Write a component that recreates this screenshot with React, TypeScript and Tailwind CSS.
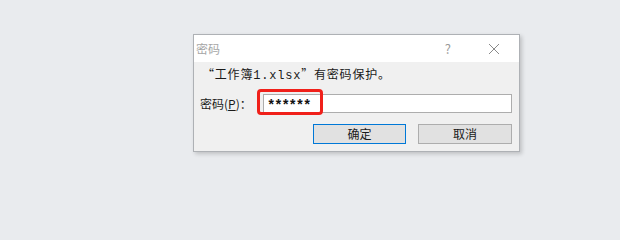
import React from "react";

const cjk = { fontFamily: '"Microsoft YaHei", "Noto Sans CJK SC", sans-serif' };

export default function App() {
  return (
    <div className="w-[620px] h-[240px] bg-[#e9ebee] pt-[34px] pl-[193px]" style={cjk}>
      {/* Dialog */}
      <div className="relative w-[327px] h-[118px] flex flex-col border border-[#aeb1b5] bg-[#f0f0f0] shadow-[2px_2px_4px_rgba(0,0,0,0.18)]">
        {/* Title bar */}
        <div className="h-[27px] bg-white flex items-center shrink-0">
          <span className="pl-[2px] text-[12px] leading-none text-[#a6a6a6]">密码</span>
          <span className="ml-auto mr-[37px] text-[13px] leading-none text-[#9a9a9a]">?</span>
          <svg width="12" height="12" viewBox="0 0 12 12" className="mr-[19px]">
            <path d="M1 1L11 11M11 1L1 11" stroke="#8a8a8a" strokeWidth="1" />
          </svg>
        </div>

        {/* Body */}
        <div className="flex-1 flex flex-col pt-[5px] pl-[8px] pr-[6px]">
          <div className="text-[12px] leading-[14px] text-[#1a1a1a] tracking-[0.8px]">
            “工作簿<span style={{ fontFamily: '"Liberation Mono", monospace' }}>1.xlsx</span>”有密码保护。
          </div>

          <div className="flex items-center mt-[11px] -ml-[2px]">
            <span className="text-[12px] leading-none text-[#1a1a1a] w-[63px]">
              密码(<span className="underline">P</span>)：
            </span>
            <div className="relative w-[249px] h-[19px] bg-white border border-[#adadad] flex items-center pl-[3px]">
              <span
                className="text-[14px] leading-none text-[#111] tracking-[-1.2px] font-bold pt-[4px]"
                style={{ fontFamily: '"Liberation Mono", monospace' }}
              >
                ******
              </span>
              {/* red highlight */}
              <div className="absolute left-[-7px] top-[-6px] w-[66px] h-[26px] border-[3px] border-[#f0201a] rounded-[4px]" />
            </div>
          </div>

          <div className="flex justify-end gap-[12px] mt-[11px] mr-[1px]">
            <button className="w-[93px] h-[20px] bg-[#e1e1e1] border border-[#0078d7] text-[12px] leading-none text-[#1a1a1a]">
              确定
            </button>
            <button className="w-[94px] h-[20px] bg-[#e1e1e1] border border-[#adadad] text-[12px] leading-none text-[#1a1a1a]">
              取消
            </button>
          </div>
        </div>
      </div>
    </div>
  );
}
